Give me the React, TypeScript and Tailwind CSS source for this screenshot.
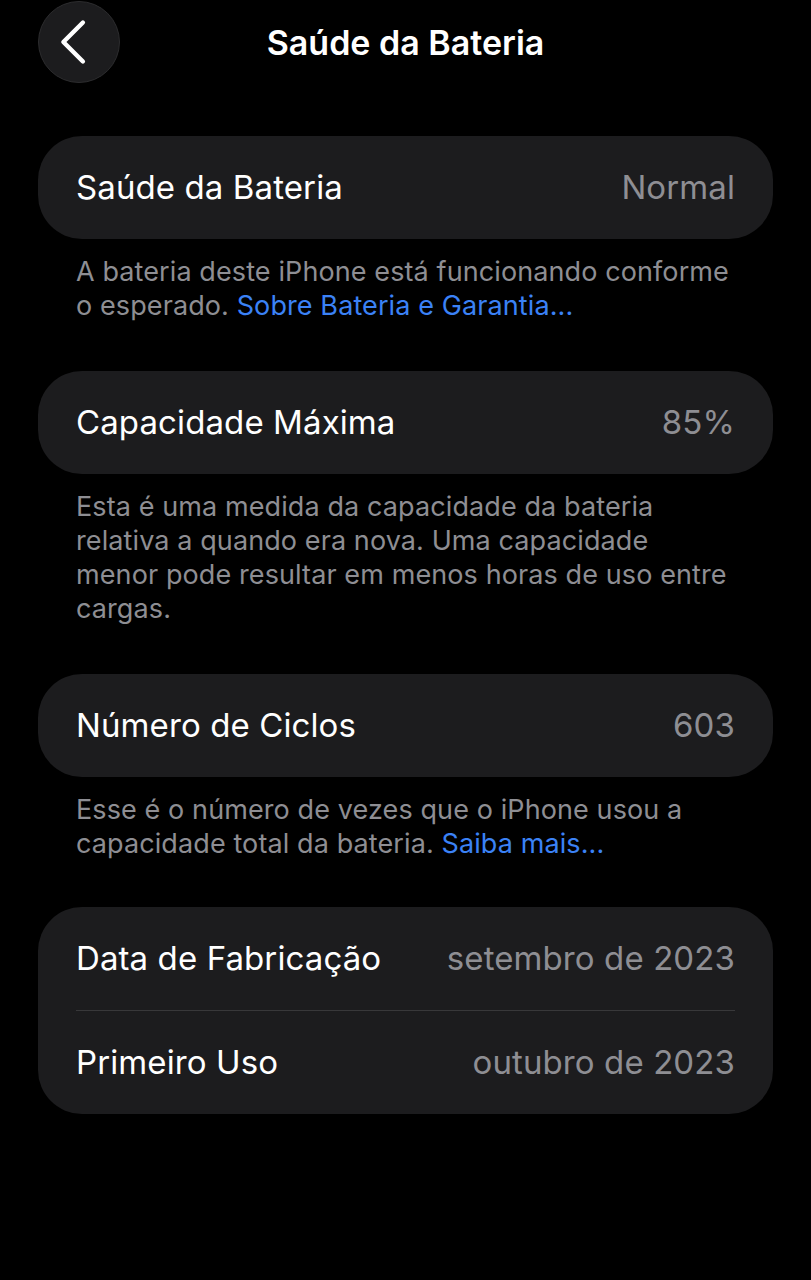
const font = { fontFamily: "Inter, 'Noto Sans', sans-serif" };

function Row({ label, value }: { label: string; value: string }) {
  return (
    <div className="flex items-center justify-between h-[103px] px-[38px]">
      <span className="text-[33px] text-white tracking-[0.1px]">{label}</span>
      <span className="text-[33px] text-[#8e8e93] tracking-[0.1px]">{value}</span>
    </div>
  );
}

function Note({ children }: { children: React.ReactNode }) {
  return (
    <p className="pt-[16px] px-[38px] text-[27px] leading-[34px] text-[#8e8e93] tracking-[0.1px] whitespace-nowrap">
      {children}
    </p>
  );
}

export default function App() {
  return (
    <div className="min-h-[1280px] bg-black px-[38px]" style={font}>
      <header className="relative flex items-center justify-center h-[84px]">
        <button className="absolute left-0 top-[1px] w-[82px] h-[82px] rounded-full bg-[#1c1c1e] border border-[#2c2c2e]">
          <svg viewBox="0 0 82 82" className="w-full h-full" fill="none">
            <polyline
              points="45,21 25,41 45,61"
              stroke="white"
              strokeWidth="4.5"
              strokeLinecap="round"
              strokeLinejoin="round"
            />
          </svg>
        </button>
        <h1 className="text-[34px] font-semibold text-white">Saúde da Bateria</h1>
      </header>

      <div className="mt-[52px] rounded-[44px] bg-[#1c1c1e]">
        <Row label="Saúde da Bateria" value="Normal" />
      </div>
      <Note>
        A bateria deste iPhone está funcionando conforme
        <br />
        o esperado. <span className="text-[#3b82f6]">Sobre Bateria e Garantia...</span>
      </Note>

      <div className="mt-[48px] rounded-[44px] bg-[#1c1c1e]">
        <Row label="Capacidade Máxima" value="85%" />
      </div>
      <Note>
        Esta é uma medida da capacidade da bateria
        <br />
        relativa a quando era nova. Uma capacidade
        <br />
        menor pode resultar em menos horas de uso entre
        <br />
        cargas.
      </Note>

      <div className="mt-[48px] rounded-[44px] bg-[#1c1c1e]">
        <Row label="Número de Ciclos" value="603" />
      </div>
      <Note>
        Esse é o número de vezes que o iPhone usou a
        <br />
        capacidade total da bateria. <span className="text-[#3b82f6]">Saiba mais...</span>
      </Note>

      <div className="mt-[46px] rounded-[44px] bg-[#1c1c1e]">
        <Row label="Data de Fabricação" value="setembro de 2023" />
        <div className="mx-[38px] h-px bg-[#38383a]" />
        <Row label="Primeiro Uso" value="outubro de 2023" />
      </div>
    </div>
  );
}
